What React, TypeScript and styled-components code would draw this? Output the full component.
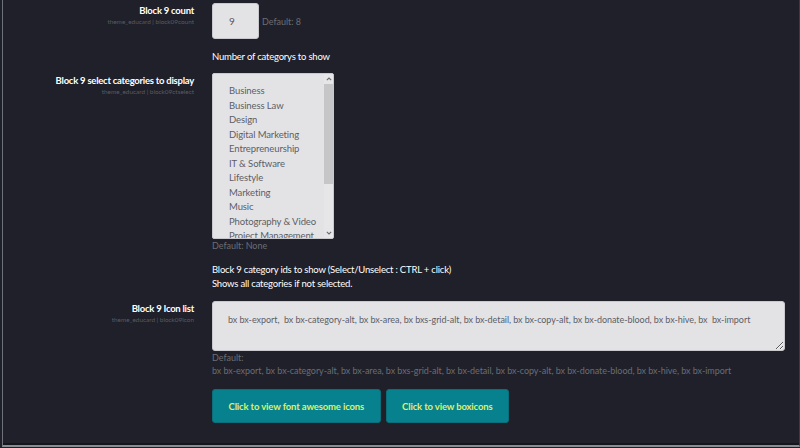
import styled, { createGlobalStyle } from 'styled-components';

const categories = [
  'Business',
  'Business Law',
  'Design',
  'Digital Marketing',
  'Entrepreneurship',
  'IT & Software',
  'Lifestyle',
  'Marketing',
  'Music',
  'Photography & Video',
  'Project Management',
];

const iconList =
  'bx bx-export,  bx bx-category-alt, bx bx-area, bx bxs-grid-alt, bx bx-detail, bx bx-copy-alt, bx bx-donate-blood, bx bx-hive, bx  bx-import';
const iconDefault =
  'bx bx-export, bx bx-category-alt, bx bx-area, bx bxs-grid-alt, bx bx-detail, bx bx-copy-alt, bx bx-donate-blood, bx bx-hive, bx bx-import';

const Chevron = ({ down }: { down?: boolean }) => (
  <svg width="6" height="4" viewBox="0 0 6 4">
    <path
      d={down ? 'M0.8 0.8 L3 3 L5.2 0.8' : 'M0.8 3.2 L3 1 L5.2 3.2'}
      fill="none"
      stroke="#6a6c72"
      strokeWidth="1.1"
    />
  </svg>
);

const App = () => {
  return (
    <>
      <GlobalStyle />
      <Panel>
        <SettingRow>
          <LabelCol>
            <Label>Block 9 count</Label>
            <SubLabel>theme_educard | block09count</SubLabel>
          </LabelCol>
          <FieldCol>
            <InlineField>
              <NumberInput type="text" defaultValue="9" />
              <DefaultText>Default: 8</DefaultText>
            </InlineField>
            <HelpText top={11}>Number of categorys to show</HelpText>
          </FieldCol>
        </SettingRow>

        <SettingRow top={9}>
          <LabelCol>
            <Label>Block 9 select categories to display</Label>
            <SubLabel>theme_educard | block09ctselect</SubLabel>
          </LabelCol>
          <FieldCol>
            <ListBox>
              <CategoryList role="listbox" aria-multiselectable="true">
                {categories.map((c) => (
                  <CategoryOption key={c} role="option">
                    {c}
                  </CategoryOption>
                ))}
              </CategoryList>
              <ScrollTrack>
                <ScrollArrow>
                  <Chevron />
                </ScrollArrow>
                <ScrollThumb />
                <ScrollArrow>
                  <Chevron down />
                </ScrollArrow>
              </ScrollTrack>
            </ListBox>
            <DefaultText>Default: None</DefaultText>
            <HelpText top={11}>
              Block 9 category ids to show (Select/Unselect : CTRL + click)
              <br />
              Shows all categories if not selected.
            </HelpText>
          </FieldCol>
        </SettingRow>

        <SettingRow top={10}>
          <LabelCol>
            <Label>Block 9 Icon list</Label>
            <SubLabel>theme_educard | block09icon</SubLabel>
          </LabelCol>
          <FieldCol>
            <IconTextArea defaultValue={iconList} />
            <DefaultText>
              Default:
              <br />
              {iconDefault}
            </DefaultText>
            <Buttons>
              <LinkButton>Click to view font awesome icons</LinkButton>
              <LinkButton>Click to view boxicons</LinkButton>
            </Buttons>
          </FieldCol>
        </SettingRow>
      </Panel>
    </>
  );
};

export default App;

const GlobalStyle = createGlobalStyle`
  html, body {
    margin: 0;
    padding: 0;
    background: #1f2029;
  }
  body {
    font-family: Lato, "Open Sans", sans-serif;
    color: #ffffff;
  }
`;

const Panel = styled.div`
  box-sizing: border-box;
  width: 798px;
  height: 447px;
  margin-left: 2px;
  padding-top: 3px;
  border-left: 1px solid #6f717a;
  border-right: 1px solid #3a3c45;
  border-bottom: 2px solid #8a8c93;
  box-shadow: inset 0 -2px 0 #15161c;
`;

const SettingRow = styled.div<{ top?: number }>`
  display: grid;
  grid-template-columns: 191px 1fr;
  column-gap: 18px;
  margin-top: ${(p) => p.top ?? 0}px;
`;

const LabelCol = styled.div`
  display: flex;
  flex-direction: column;
  align-items: flex-end;
  padding-top: 1px;
`;

const Label = styled.div`
  font-size: 9.5px;
  font-weight: 700;
  letter-spacing: -0.25px;
  line-height: 13px;
  color: #ffffff;
`;

const SubLabel = styled.div`
  font-size: 6.4px;
  line-height: 9px;
  color: #5a5c64;
`;

const FieldCol = styled.div`
  display: flex;
  flex-direction: column;
  align-items: flex-start;
`;

const InlineField = styled.div`
  display: flex;
  align-items: center;
  gap: 3px;
`;

const NumberInput = styled.input`
  box-sizing: border-box;
  width: 47px;
  height: 36px;
  padding: 0 0 0 16px;
  font-family: inherit;
  font-size: 10px;
  color: #555760;
  background: #e3e3e6;
  border: 1px solid #c9c9cd;
  border-radius: 3px;
  outline: none;
`;

const DefaultText = styled.div`
  font-size: 9px;
  letter-spacing: -0.04px;
  line-height: 13px;
  color: #6b6d74;
`;

const HelpText = styled.div<{ top?: number }>`
  margin-top: ${(p) => p.top ?? 0}px;
  font-size: 9.5px;
  letter-spacing: -0.2px;
  line-height: 14px;
  color: #ffffff;
`;

const ListBox = styled.div`
  position: relative;
  box-sizing: border-box;
  width: 122px;
  height: 166px;
  background: #e3e3e6;
  border: 1px solid #c9c9cd;
  border-radius: 2px;
  overflow: hidden;
`;

const CategoryList = styled.div`
  height: 100%;
  padding: 10px 10px 0 16px;
  box-sizing: border-box;
  overflow: hidden;
`;

const CategoryOption = styled.div`
  font-size: 9.5px;
  letter-spacing: -0.1px;
  line-height: 14.5px;
  color: #5c5e66;
  white-space: nowrap;
  cursor: default;
`;

const ScrollTrack = styled.div`
  position: absolute;
  top: 0;
  right: 0;
  bottom: 0;
  width: 9px;
  display: flex;
  flex-direction: column;
  background: #e6e6e8;
`;

const ScrollArrow = styled.div`
  height: 10px;
  display: flex;
  align-items: center;
  justify-content: center;
  flex: none;
`;

const ScrollThumb = styled.div`
  height: 100px;
  margin-bottom: auto;
  background: #c6c6c9;
`;

const IconTextArea = styled.textarea`
  box-sizing: border-box;
  width: 573px;
  height: 50px;
  padding: 11px 15px;
  font-family: inherit;
  font-size: 9px;
  letter-spacing: -0.05px;
  line-height: 14px;
  color: #5c5e66;
  background: #e3e3e6;
  border: 1px solid #c9c9cd;
  border-radius: 3px;
  outline: none;
  resize: vertical;
`;

const Buttons = styled.div`
  display: flex;
  gap: 5px;
  margin-top: 12px;
`;

const LinkButton = styled.button`
  height: 34px;
  padding: 0 15.5px;
  font-family: inherit;
  font-size: 9.5px;
  font-weight: 700;
  letter-spacing: -0.15px;
  color: #dcf06c;
  background: #08818f;
  border: 1px solid #0a6f7b;
  border-radius: 3px;
  cursor: pointer;
`;
